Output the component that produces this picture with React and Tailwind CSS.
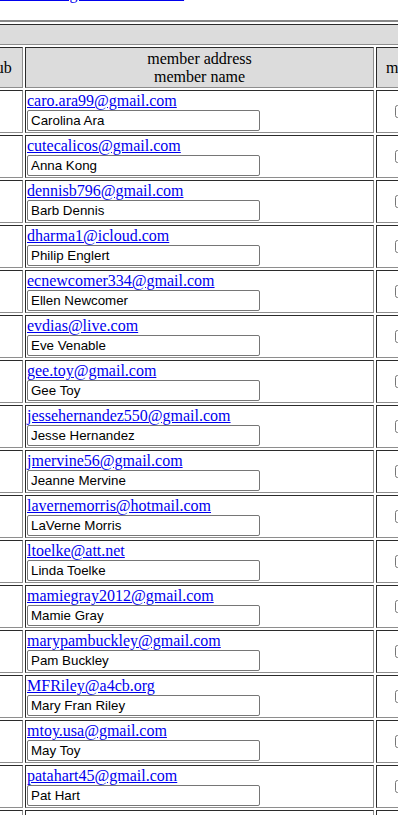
import React from 'react';

const MEMBERS = [
  ['caro.ara99@gmail.com', 'Carolina Ara'],
  ['cutecalicos@gmail.com', 'Anna Kong'],
  ['dennisb796@gmail.com', 'Barb Dennis'],
  ['dharma1@icloud.com', 'Philip Englert'],
  ['ecnewcomer334@gmail.com', 'Ellen Newcomer'],
  ['evdias@live.com', 'Eve Venable'],
  ['gee.toy@gmail.com', 'Gee Toy'],
  ['jessehernandez550@gmail.com', 'Jesse Hernandez'],
  ['jmervine56@gmail.com', 'Jeanne Mervine'],
  ['lavernemorris@hotmail.com', 'LaVerne Morris'],
  ['ltoelke@att.net', 'Linda Toelke'],
  ['mamiegray2012@gmail.com', 'Mamie Gray'],
  ['marypambuckley@gmail.com', 'Pam Buckley'],
  ['MFRiley@a4cb.org', 'Mary Fran Riley'],
  ['mtoy.usa@gmail.com', 'May Toy'],
  ['patahart45@gmail.com', 'Pat Hart'],
  ['pmarsano@comcast.net', 'Pia Marsano'],
];

// old-school "inset" cell border: dark top/left, grey bottom/right
const CELL =
  'border border-t-[#2b2b2b] border-l-[#2b2b2b] border-r-[#8e8e8e] border-b-[#8e8e8e] p-[1px]';

function MemberRow({ email, name }) {
  return (
    <>
      <div className={`${CELL} h-[43px] bg-white`} />
      <div className={`${CELL} h-[43px] bg-white`}>
        <a
          href={`mailto:${email}`}
          className="block leading-[18px] text-[16px] text-[#0000ee] underline"
        >
          {email}
        </a>
        <input
          type="text"
          readOnly
          defaultValue={name}
          className="block w-[233px] h-[21px] border border-[#767676] rounded-[2px] bg-white px-[3px] text-[13.33px] leading-[15px] text-black font-['Liberation_Sans',Arial,sans-serif] outline-none"
        />
      </div>
      <div className={`${CELL} h-[43px] bg-white flex items-center justify-center`}>
        <input type="checkbox" className="m-0 w-[13px] h-[13px]" />
      </div>
    </>
  );
}

export default function App() {
  return (
    <div className="w-[398px] h-[815px] overflow-hidden bg-white text-black font-['Liberation_Serif','Times_New_Roman',serif]">
      <div className="-ml-[31px] w-[461px]">
        <div className="-mt-[15px] h-[18px] leading-[18px] text-[16px]">
          <a href="#manage" className="text-[#0000ee] underline">
            Return to Manage Club Members
          </a>
        </div>

        <div className="mt-[17px] border-2 border-t-[#888888] border-l-[#888888] border-r-[#4a4a4a] border-b-[#4a4a4a] p-[2px]">
          <div className="grid grid-cols-[50px_349px_50px] gap-[2px]">
            <div className={`${CELL} col-span-3 h-[21px] bg-[#dcdcdc]`} />

            <div className={`${CELL} h-[41px] bg-[#dcdcdc] flex items-center justify-center text-[16px] leading-[18px]`}>
              club
            </div>
            <div className={`${CELL} h-[41px] bg-[#dcdcdc] flex flex-col items-center justify-center text-[16px] leading-[18px]`}>
              <span>member address</span>
              <span>member name</span>
            </div>
            <div className={`${CELL} h-[41px] bg-[#dcdcdc] flex items-center justify-start pl-[9px] text-[16px] leading-[18px]`}>
              mail
            </div>

            {MEMBERS.map(([email, name]) => (
              <MemberRow key={email} email={email} name={name} />
            ))}
          </div>
        </div>
      </div>
    </div>
  );
}
